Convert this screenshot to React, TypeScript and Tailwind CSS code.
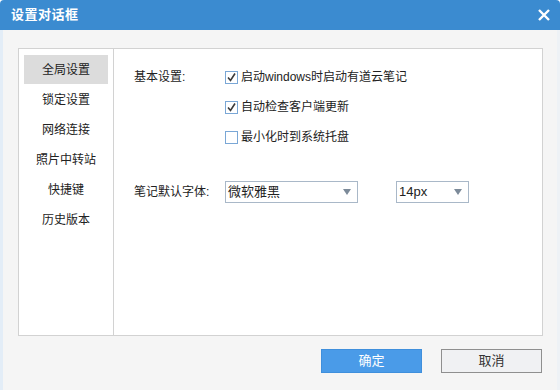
import React from "react";

const font = { fontFamily: '"Liberation Sans", "Noto Sans CJK SC", sans-serif' };

function Check({ checked }: { checked: boolean }) {
  return (
    <span className="w-[13px] h-[13px] border border-[#7aa7d6] bg-white flex items-center justify-center shrink-0">
      {checked && (
        <svg width="11" height="11" viewBox="0 0 11 11">
          <path d="M2 5.5 L4.5 8.5 L9 1.5" stroke="#3a3a3a" strokeWidth="1.6" fill="none" />
        </svg>
      )}
    </span>
  );
}

function Select({ value, width }: { value: string; width: string }) {
  return (
    <div className={`${width} h-[22px] border border-[#a9b8c8] bg-white flex items-center justify-between pl-[2px] pr-[6px]`}>
      <span className="text-[13px] text-[#222]">{value}</span>
      <svg width="8" height="6" viewBox="0 0 8 6">
        <path d="M0 0 L8 0 L4 6 Z" fill="#7c8a99" />
      </svg>
    </div>
  );
}

export default function App() {
  const items = ["全局设置", "锁定设置", "网络连接", "照片中转站", "快捷键", "历史版本"];
  return (
    <div className="w-[560px] h-[390px] flex flex-col bg-white" style={font}>
      <div className="h-[30px] bg-[#3b8bd0] rounded-t-[4px] flex items-center justify-between pl-[11px] pr-[8px] shrink-0">
        <span className="text-white text-[13px] font-bold tracking-[0.5px]">设置对话框</span>
        <svg width="16" height="16" viewBox="0 0 16 16">
          <path d="M3 3 L13 13 M13 3 L3 13" stroke="white" strokeWidth="2.4" />
        </svg>
      </div>
      <div className="flex-1 bg-[#f5f5f5] border-l-[3px] border-l-[#e3edf7] border-r-[3px] border-r-[#eef2f6] flex flex-col pl-[15px] pr-[14px] pt-[18px]">
        <div className="h-[288px] bg-white border border-[#d2d2d2] flex">
          <div className="w-[95px] border-r border-[#d2d2d2] flex flex-col pt-[6px] px-[5px] gap-[1px]">
            {items.map((t, i) => (
              <div
                key={t}
                className={`h-[29px] flex items-center justify-center text-[12px] text-[#222] ${i === 0 ? "bg-[#dcdcdc]" : ""}`}
              >
                {t}
              </div>
            ))}
          </div>
          <div className="flex-1 pl-[20px] pt-[18px] text-[12px] text-[#222]">
            <div className="flex">
              <div className="w-[91px] h-[20px] flex items-center">基本设置:</div>
              <div className="flex flex-col gap-[10px]">
                <div className="h-[20px] flex items-center gap-[3px]"><Check checked />启动windows时启动有道云笔记</div>
                <div className="h-[20px] flex items-center gap-[3px]"><Check checked />自动检查客户端更新</div>
                <div className="h-[20px] flex items-center gap-[3px]"><Check checked={false} />最小化时到系统托盘</div>
              </div>
            </div>
            <div className="flex items-center mt-[34px]">
              <div className="w-[91px]">笔记默认字体:</div>
              <Select value="微软雅黑" width="w-[133px]" />
              <div className="w-[38px]" />
              <Select value="14px" width="w-[73px]" />
            </div>
          </div>
        </div>
        <div className="flex justify-end gap-[19px] mt-[13px] pr-[1px]">
          <div className="w-[101px] h-[24px] bg-[#4a9be8] border border-[#3f8fdc] flex items-center justify-center text-white text-[13px]">确定</div>
          <div className="w-[101px] h-[24px] bg-[#f0f1f3] border border-[#8f8f8f] flex items-center justify-center text-[#333] text-[13px]">取消</div>
        </div>
      </div>
    </div>
  );
}
